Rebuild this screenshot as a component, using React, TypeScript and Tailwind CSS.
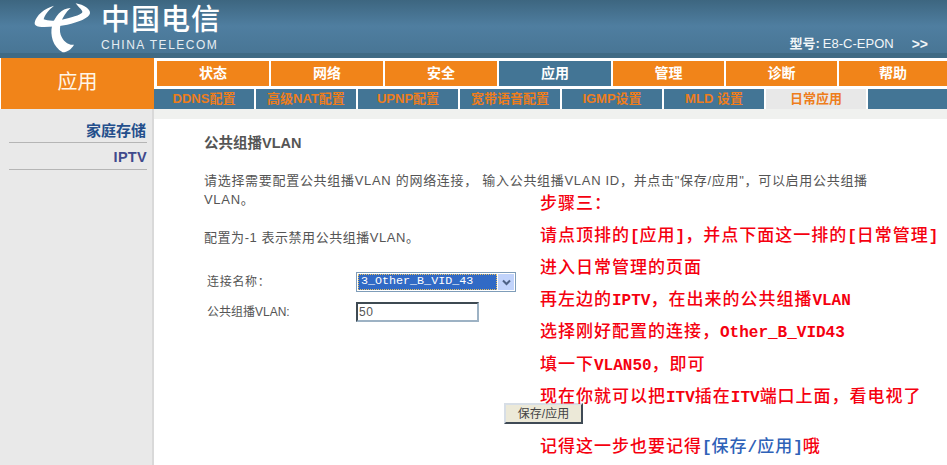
const topTabs = ["状态", "网络", "安全", "应用", "管理", "诊断", "帮助"];
const subTabs = ["DDNS配置", "高级NAT配置", "UPNP配置", "宽带语音配置", "IGMP设置", "MLD 设置", "日常应用"];

const notes = [
  "步骤三：",
  "请点顶排的[应用]，并点下面这一排的[日常管理]",
  "进入日常管理的页面",
  "再左边的IPTV，在出来的公共组播VLAN",
  "选择刚好配置的连接，Other_B_VID43",
  "填一下VLAN50，即可",
  "现在你就可以把ITV插在ITV端口上面，看电视了",
];

// latin runs are set smaller and tighter than the chinese in the red notes
function Note({ text }: { text: string }) {
  const parts = text.split(/([\x21-\x7e]+)/);
  return (
    <>
      {parts.map((part, i) =>
        i % 2 === 1 ? (
          <span key={i} className="text-[16px] font-bold tracking-normal">{part}</span>
        ) : (
          part
        )
      )}
    </>
  );
}

function Logo() {
  return (
    <svg width="66" height="56" viewBox="0 0 198 168" className="shrink-0">
      <path
        fill="#fff"
        d="M20 68C24 46 50 25 78 17 62 30 50 45 47 58 60 64 90 64 120 55 150 46 168 40 162 32 158 26 150 20 143 10 168 14 188 28 186 40 184 54 150 68 118 74 85 80 50 82 34 80 24 78 19 74 20 68Z"
      />
      <path
        fill="#fff"
        d="M128 24C100 24 80 50 72 78 66 105 74 140 104 157 118 156 130 148 138 134 120 136 106 124 98 104 92 84 98 50 128 24Z"
      />
    </svg>
  );
}

export default function App() {
  return (
    <div className="relative flex h-[465px] w-[947px] flex-col overflow-hidden bg-white font-['Liberation_Sans','Noto_Sans_CJK_SC',sans-serif]">
      <header className="flex h-[58px] shrink-0 flex-col bg-[linear-gradient(#3d6680,#4f7ea0_45%,#477493)]">
        <div className="flex h-[53px] items-start pl-[28px] text-white">
          <Logo />
          <div className="ml-[7px] mt-[3px] flex flex-col">
            <span className="h-[34px] text-[29px] leading-[34px] font-medium tracking-[1px]">中国电信</span>
            <span className="mt-[2px] text-[12px] leading-[12px] tracking-[1.5px] text-[#e6edf2]">CHINA TELECOM</span>
          </div>
          <div className="ml-auto flex items-center pr-[19px] pt-[37px] text-[13px] leading-[14px] text-[#f2f6f8]">
            <span className="font-bold">型号:</span>
            <span className="ml-[3px]">E8-C-EPON</span>
            <span className="ml-[18px] text-[14px] font-bold">&gt;&gt;</span>
          </div>
        </div>
        <div className="h-[5px] bg-[#3f6a84]" />
      </header>

      <div className="flex h-[51px] shrink-0">
        <div className="ml-[1px] flex w-[153px] shrink-0 items-center justify-center bg-[#f18419] pb-[4px] text-[20px] text-[#fff6e8]">
          应用
        </div>
        <nav className="flex w-[793px] flex-col">
          <div className="mt-[3px] grid h-[25px] grid-cols-[112px_112px_112px_112px_111px_111px_1fr] gap-[2px] pl-[3px]">
            {topTabs.map((tab) => (
              <div
                key={tab}
                className={
                  tab === "应用"
                    ? "flex items-center justify-center bg-[#437595] text-[14px] font-bold text-white"
                    : "flex items-center justify-center bg-[#f18419] text-[14px] font-bold text-white"
                }
              >
                {tab}
              </div>
            ))}
          </div>
          <div className="mt-[3px] flex h-[20px] gap-[2px]">
            {subTabs.map((tab) => (
              <div
                key={tab}
                className={
                  tab === "日常应用"
                    ? "flex w-[100px] shrink-0 items-center justify-center bg-[#e8e8e8] text-[13px] font-bold text-[#ee7d1c]"
                    : "flex w-[100px] shrink-0 items-center justify-center bg-[#437595] text-[13px] font-bold text-[#ee7d1c]"
                }
              >
                {tab}
              </div>
            ))}
            <div className="min-w-0 flex-1 bg-[#437595]" />
          </div>
        </nav>
      </div>

      <div className="flex flex-1">
        <aside className="flex w-[154px] shrink-0 flex-col items-stretch border-r-2 border-[#d9d9d9] bg-[#e9e9e9] pl-[9px] pr-[5px] pt-[10px]">
          <div className="h-[24px] border-b border-[#b5b5b5] pr-[1px] text-right text-[15px] leading-[24px] font-bold text-[#244f8c]">
            家庭存储
          </div>
          <div className="h-[27px] border-b border-[#b5b5b5] pt-[2px] text-right text-[14.5px] leading-[25px] font-bold tracking-[0.3px] text-[#3f4a8c]">
            IPTV
          </div>
        </aside>

        <main className="flex-1 text-[13px] tracking-[0.7px] text-[#555]">
          <div className="h-[10px] bg-[#f0f1ef]" />
          <div className="pl-[50px]">
            <h1 className="mt-[16px] text-[14.5px] leading-[16px] font-bold tracking-normal text-[#555]">公共组播VLAN</h1>
            <p className="mt-[20px] w-[675px] leading-[19px]">
              请选择需要配置公共组播VLAN 的网络连接， 输入公共组播VLAN ID，并点击"保存/应用"，可以启用公共组播VLAN。
            </p>
            <p className="mt-[21px] leading-[16px] tracking-[0.55px]">配置为-1 表示禁用公共组播VLAN。</p>
            <div className="mt-[26px] flex h-[20px] items-center text-[12px]">
              <span className="ml-[3px] w-[149px]">连接名称：</span>
              <div className="flex h-[20px] w-[160px] items-center border border-[#7f9db9] bg-white p-[1px]">
                <span className="flex h-[16px] flex-1 items-center border border-dotted border-[#e8c060] bg-[#316ac5] pl-[2px] font-['Liberation_Mono',monospace] text-[11.7px] tracking-normal text-white">
                  3_Other_B_VID_43
                </span>
                <span className="ml-[1px] flex h-[16px] w-[16px] items-center justify-center bg-[#c1d3fb]">
                  <svg width="9" height="7" viewBox="0 0 9 7">
                    <path d="M1 1.5 4.5 5 8 1.5" fill="none" stroke="#4d6185" strokeWidth="2" />
                  </svg>
                </span>
              </div>
            </div>
            <div className="mt-[10px] flex h-[20px] items-center text-[12px]">
              <span className="ml-[3px] w-[149px] tracking-normal">公共组播VLAN:</span>
              <div className="flex h-[20px] w-[123px] items-center border-2 border-t-[#3e4a52] border-r-[#9db2c4] border-b-[#9db2c4] border-l-[#3e4a52] bg-white pl-[1px] leading-none">
                50
              </div>
            </div>
          </div>
          <div className="pl-[350px] pt-[81px]">
            <div className="flex h-[21px] w-[79px] items-center justify-center border-2 border-t-[#d7dee6] border-r-[#3f4a55] border-b-[#3f4a55] border-l-[#d7dee6] bg-[#ece9d8] text-[12px] tracking-normal text-[#444]">
              保存/应用
            </div>
          </div>
        </main>
      </div>

      <div className="absolute left-[540px] top-[189px] flex flex-col font-['Liberation_Mono','Noto_Sans_CJK_SC',monospace] text-[17px] leading-[31.5px] font-medium tracking-[1px] text-[#f5000f]">
        {notes.map((n) => (
          <span key={n} className="whitespace-nowrap">
            <Note text={n} />
          </span>
        ))}
        <span className="mt-[17px] whitespace-nowrap">
          记得这一步也要记得
          <span className="text-[#2f62b8]">
            <Note text="[保存/应用]" />
          </span>
          哦
        </span>
      </div>
    </div>
  );
}
